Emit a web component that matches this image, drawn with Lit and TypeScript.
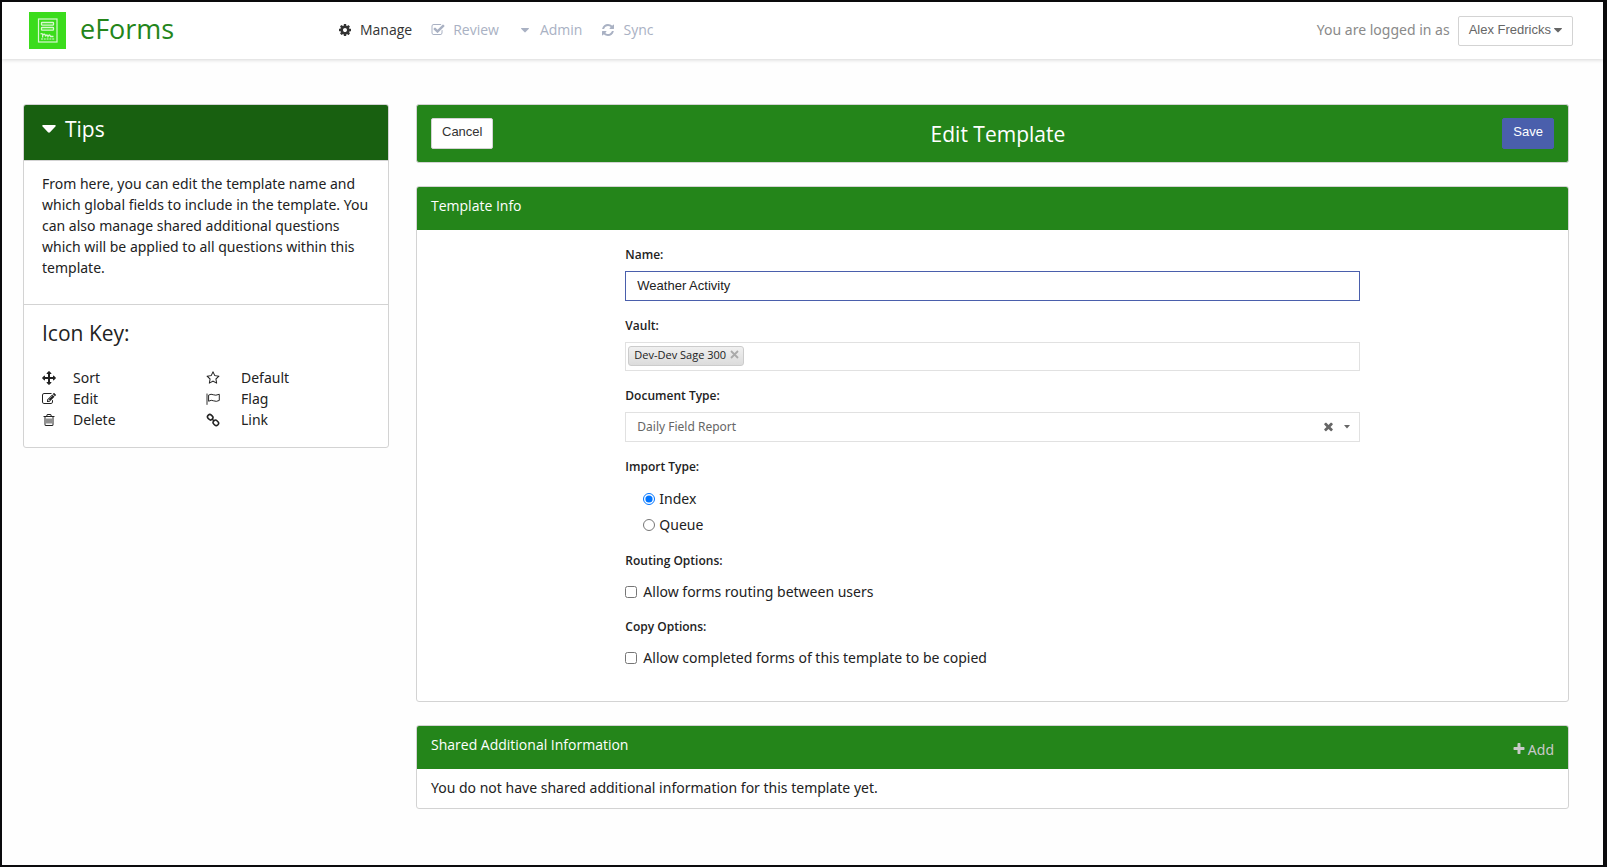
import { LitElement, html, css, svg } from "lit";
import { customElement, state, query } from "lit/decorators.js";

const GLYPHS: Record<string, string> = {
  gear: "M1152 896q0-106-75-181t-181-75-181 75-75 181 75 181 181 75 181-75 75-181zm512-109v222q0 12-8 23t-20 13l-185 28q-19 54-39 91 35 50 107 138 10 12 10 25t-9 23q-27 37-99 108t-94 71q-12 0-26-9l-138-108q-44 23-91 38-16 136-29 186-7 28-36 28h-222q-14 0-24.5-8.5t-11.5-21.5l-28-184q-49-16-90-37l-141 107q-10 9-25 9-14 0-25-11-126-114-165-168-7-10-7-23 0-12 8-23 15-21 51-66.5t54-70.5q-27-50-41-99l-183-27q-13-2-21-12.5t-8-23.5v-222q0-12 8-23t19-13l186-28q14-46 39-92-40-57-107-138-10-12-10-24 0-10 9-23 26-36 98.5-107.5t94.5-71.5q13 0 26 10l138 107q44-23 91-38 16-136 29-186 7-28 36-28h222q14 0 24.5 8.5t11.5 21.5l28 184q49 16 90 37l142-107q9-9 24-9 13 0 25 10 129 119 165 170 7 8 7 22 0 12-8 23-15 21-51 66.5t-54 70.5q26 50 41 98l183 28q13 2 21 12.5t8 23.5z",
  check: "M1472 930v318q0 119-84.5 203.5t-203.5 84.5h-832q-119 0-203.5-84.5t-84.5-203.5v-832q0-119 84.5-203.5t203.5-84.5h832q63 0 117 25 15 7 18 23 3 17-9 29l-49 49q-10 10-23 10-3 0-9-2-23-6-45-6h-832q-66 0-113 47t-47 113v832q0 66 47 113t113 47h832q66 0 113-47t47-113v-254q0-13 9-22l64-64q10-10 23-10 6 0 12 3 20 8 20 29zm231-489l-814 814q-24 24-57 24t-57-24l-430-430q-24-24-24-57t24-57l110-110q24-24 57-24t57 24l263 263 647-647q24-24 57-24t57 24l110 110q24 24 24 57t-24 57z",
  sync: "M1639 1056q0 5-1 7-64 268-268 434.5t-478 166.5q-146 0-282.5-55t-243.5-157l-129 129q-19 19-45 19t-45-19-19-45v-448q0-26 19-45t45-19h448q26 0 45 19t19 45-19 45l-137 137q71 66 161 102t187 36q134 0 250-65t186-179q11-17 53-117 8-23 30-23h192q13 0 22.5 9.5t9.5 22.5zm25-800v448q0 26-19 45t-45 19h-448q-26 0-45-19t-19-45 19-45l138-138q-148-137-349-137-134 0-250 65t-186 179q-11 17-53 117-8 23-30 23h-199q-13 0-22.5-9.5t-9.5-22.5v-7q65-268 270-434.5t480-166.5q146 0 284 55.5t245 156.5l130-129q19-19 45-19t45 19 19 45z",
  caret: "M1408 704q0 26-19 45l-448 448q-19 19-45 19t-45-19l-448-448q-19-19-19-45t19-45 45-19h896q26 0 45 19t19 45z",
  move: "M1792 896q0 26-19 45l-256 256q-19 19-45 19t-45-19-19-45v-128h-384v384h128q26 0 45 19t19 45-19 45l-256 256q-19 19-45 19t-45-19l-256-256q-19-19-19-45t19-45 45-19h128v-384h-384v128q0 26-19 45t-45 19-45-19l-256-256q-19-19-19-45t19-45l256-256q19-19 45-19t45 19 19 45v128h384v-384h-128q-26 0-45-19t-19-45 19-45l256-256q19-19 45-19t45 19l256 256q19 19 19 45t-19 45-45 19h-128v384h384v-128q0-26 19-45t45-19 45 19l256 256q19 19 19 45z",
  edit: "M888 1184l116-116-152-152-116 116v56h96v96h56zm440-720q-16-16-33 1l-350 350q-17 17-1 33t33-1l350-350q17-17 1-33zm80 594v190q0 119-84.5 203.5t-203.5 84.5h-832q-119 0-203.5-84.5t-84.5-203.5v-832q0-119 84.5-203.5t203.5-84.5h832q63 0 117 25 15 7 18 23 3 17-9 29l-49 49q-14 14-32 8-23-6-45-6h-832q-66 0-113 47t-47 113v832q0 66 47 113t113 47h832q66 0 113-47t47-113v-126q0-13 9-22l64-64q15-15 35-7t20 29zm-96-738l288 288-672 672h-288v-288zm444 132l-92 92-288-288 92-92q28-28 68-28t68 28l152 152q28 28 28 68t-28 68z",
  trash: "M704 736v576q0 14-9 23t-23 9h-64q-14 0-23-9t-9-23v-576q0-14 9-23t23-9h64q14 0 23 9t9 23zm256 0v576q0 14-9 23t-23 9h-64q-14 0-23-9t-9-23v-576q0-14 9-23t23-9h64q14 0 23 9t9 23zm256 0v576q0 14-9 23t-23 9h-64q-14 0-23-9t-9-23v-576q0-14 9-23t23-9h64q14 0 23 9t9 23zm128 724v-948h-896v948q0 22 7 40.5t14.5 27 10.5 8.5h832q3 0 10.5-8.5t14.5-27 7-40.5zm-672-1076h448l-48-117q-7-9-17-11h-317q-10 2-17 11zm928 32v64q0 14-9 23t-23 9h-96v948q0 83-47 143.5t-113 60.5h-832q-66 0-113-58.5t-47-141.5v-952h-96q-14 0-23-9t-9-23v-64q0-14 9-23t23-9h309l70-167q15-37 54-63t79-26h320q40 0 79 26t54 63l70 167h309q14 0 23 9t9 23z",
  star: "M1201 1004l306-297-422-62-189-382-189 382-422 62 306 297-73 421 378-199 377 199zm527-357q0 22-26 48l-363 354 86 500q1 7 1 20 0 50-41 50-19 0-40-12l-449-236-449 236q-22 12-40 12-21 0-31.5-14.5t-10.5-35.5q0-6 2-20l86-500-364-354q-25-27-25-48 0-37 56-46l502-73 225-455q19-41 49-41t49 41l225 455 502 73q56 9 56 46z",
  plus: "M1600 736v192q0 40-28 68t-68 28h-416v416q0 40-28 68t-68 28h-192q-40 0-68-28t-28-68v-416h-416q-40 0-68-28t-28-68v-192q0-40 28-68t68-28h416v-416q0-40 28-68t68-28h192q40 0 68 28t28 68v416h416q40 0 68 28t28 68z",
  times: "M1490 1322q0 40-28 68l-136 136q-28 28-68 28t-68-28l-294-294-294 294q-28 28-68 28t-68-28l-136-136q-28-28-28-68t28-68l294-294-294-294q-28-28-28-68t28-68l136-136q28-28 68-28t68 28l294 294 294-294q28-28 68-28t68 28l136 136q28 28 28 68t-28 68l-294 294 294 294q28 28 28 68z",
};

const STROKED: Record<string, unknown> = {
  flag: svg`<path d="M128 200V1640" stroke-width="120" />
    <path d="M330 400Q660 200 930 350T1700 290V1080Q1300 1290 990 1130T330 1180Z" stroke-width="125" />`,
  link: svg`<rect x="180" y="250" width="720" height="580" rx="270" transform="rotate(45 540 540)" stroke-width="200" />
    <rect x="900" y="970" width="720" height="580" rx="270" transform="rotate(45 1260 1260)" stroke-width="200" />
    <path d="M740 740L1060 1060" stroke-width="200" />`,
};

const icon = (name: string) => html`<svg class="icon" viewBox="0 0 1792 1792" aria-hidden="true">
  ${GLYPHS[name]
    ? svg`<path d=${GLYPHS[name]} fill="currentColor" />`
    : svg`<g fill="none" stroke="currentColor" stroke-linejoin="round">${STROKED[name]}</g>`}
</svg>`;

const NAV = [
  { icon: "gear", label: "Manage", active: true },
  { icon: "check", label: "Review", active: false },
  { icon: "caret", label: "Admin", active: false },
  { icon: "sync", label: "Sync", active: false },
];

const ICON_KEY = [
  { icon: "move", label: "Sort" },
  { icon: "star", label: "Default" },
  { icon: "edit", label: "Edit" },
  { icon: "flag", label: "Flag" },
  { icon: "trash", label: "Delete" },
  { icon: "link", label: "Link" },
];

@customElement("app-root")
export class AppRoot extends LitElement {
  @state() private name = "Weather Activity";
  @state() private vaults = ["Dev-Dev Sage 300"];
  @state() private importType = "Index";
  @query("#name") private nameInput!: HTMLInputElement;

  static styles = css`
    :host {
      --display: "Open Sans", "Noto Sans", sans-serif;
      --body: "Noto Sans", "Open Sans", sans-serif;
      display: block;
      box-sizing: border-box;
      min-height: 100vh;
      border: solid #0b0b0d;
      border-width: 2px 4px 3px 2px;
      background: #fefefe;
      color: #222;
      font: 14px/21px var(--body);
    }
    *, *::before, *::after { box-sizing: border-box; }
    h1, h2, h3, p, ul, fieldset { margin: 0; padding: 0; border: 0; font-weight: 400; }
    ul { list-style: none; }
    a { color: inherit; text-decoration: none; }
    button, input, select { font: 13px/18px "Liberation Sans", Arial, sans-serif; color: inherit; }
    button { cursor: pointer; }
    .icon { width: 14px; height: 14px; flex: none; display: block; }

    .topbar {
      display: flex;
      align-items: center;
      height: 57px;
      padding: 0 30px 0 27px;
      background: #fff;
      box-shadow: 0 1px 4px rgba(0, 0, 0, 0.16);
    }
    .brand { display: flex; align-items: center; gap: 14px; width: 309px; color: #24851a; font: 27px/32px var(--display); }
    .brand span { padding-bottom: 4px; }
    .logo { width: 37px; height: 37px; display: block; }
    .nav { display: flex; gap: 19px; flex: 1; padding-bottom: 2px; }
    .nav-link { display: flex; align-items: center; gap: 8px; color: #a9b1c3; font-family: var(--display); }
    .nav-link.active { color: #333; }
    .session { display: flex; align-items: center; gap: 8px; color: #8a8a8a; }
    .session span { padding-bottom: 2px; }
    .user {
      display: flex;
      align-items: flex-start;
      height: 30px;
      padding: 4px 7px 0 10px;
      border: 1px solid #d3d3d3;
      border-radius: 2px;
      background: #fff;
      color: #666;
    }
    .user .icon { margin-top: 2px; }

    .layout {
      display: grid;
      grid-template-columns: 366fr 1153fr;
      gap: 27px;
      align-items: start;
      padding: 45px 34px 56px 21px;
    }
    .main { display: grid; gap: 23px; }
    .card { border: 1px solid #d3d3d3; border-radius: 3px; overflow: hidden; background: #fff; }
    .tips-head {
      display: flex;
      align-items: center;
      gap: 9px;
      width: 100%;
      height: 56px;
      padding: 0 18px 8px;
      border: 0;
      border-bottom: 1px solid #d3d3d3;
      background: #186010;
      color: #fff;
      font: 21px/30px var(--display);
    }
    .tri { width: 14px; height: 8px; display: block; }
    .tips-body { padding: 12px 18px 26px; border-bottom: 1px solid #d3d3d3; }
    .key { padding: 13px 18px 17px; }
    .key-title { font: 21px/30px var(--display); margin-bottom: 19px; }
    .key-list { display: grid; grid-template-columns: 164px 1fr; }
    .key-item { display: flex; align-items: center; gap: 17px; }
    .key-item:nth-child(even) { gap: 21px; }

    .titlebar { display: flex; align-items: center; justify-content: space-between; padding: 13px 14px; background: #24851a; }
    .title { color: #fff; font: 21px/30px var(--display); }
    .btn { height: 31px; padding: 0 10px 4px; border: 1px solid #d3d3d3; border-radius: 2px; background: #fff; color: #333; }
    .btn.primary { border-color: #4a5fac; background: #4a5fac; color: #fff; }

    .head { display: flex; justify-content: space-between; height: 43px; padding: 8px 14px; background: #24851a; color: #fff; }
    .head-title { font: 500 14px/21px var(--display); }
    .add { display: flex; align-items: center; gap: 2px; margin-top: 3px; color: #c9c9c9; }

    .form { width: 63.8%; margin: 0 auto; padding: 15px 0 33px; }
    .label { display: block; padding: 0; font: 600 12px/20px var(--display); margin-bottom: 6px; }
    .field { margin-bottom: 15px; }
    .text { display: block; width: 100%; height: 30px; padding: 0 11px 2px; border: 1px solid #e1e1e1; background: #fff; outline: 0; }
    .text:focus { border-color: #4a5fac; }
    .chips { display: flex; align-items: flex-start; height: 29px; padding: 3px 2px; border: 1px solid #e1e1e1; background: #fff; }
    .chip {
      display: flex;
      gap: 4px;
      height: 20px;
      padding: 0 4px 0 5px;
      border: 1px solid #ccc;
      border-radius: 3px;
      background: linear-gradient(#f0f0f0, #dcdcdc);
      font: 11px/16px var(--display);
    }
    .chip-x { width: 9px; height: 9px; margin-top: 3px; padding: 0; border: 0; background: none; color: #aaa; }
    .chip-x svg { display: block; width: 9px; height: 9px; }
    .chips-input { flex: 1; min-width: 20px; height: 20px; border: 0; padding: 0 4px; outline: 0; background: none; }
    .picker { position: relative; }
    .select {
      display: block;
      width: 100%;
      height: 30px;
      padding: 0 60px 0 11px;
      border: 1px solid #e1e1e1;
      border-radius: 0;
      background: #fff;
      color: #666;
      appearance: none;
      font: 12px/18px var(--body);
    }
    .picker-tools { position: absolute; top: 0; right: 10px; height: 29px; display: flex; align-items: center; gap: 9px; color: #666; pointer-events: none; }
    .clear { padding: 0; border: 0; background: none; pointer-events: auto; }
    .clear .icon { width: 13px; height: 13px; }
    .picker-tools .small { width: 6px; height: 4px; display: block; }
    .radios { display: grid; gap: 5px; padding: 5px 0 1px 18px; }
    .choice { display: flex; align-items: center; gap: 4px; }
    .choice input { width: 12px; height: 12px; margin: 0; }
    .checks { gap: 6px; padding-top: 4px; }
    .empty { padding: 8px 14px 10px; }
  `;

  protected firstUpdated() {
    this.nameInput.focus();
    this.nameInput.setSelectionRange(this.name.length, this.name.length);
  }

  private logo() {
    return html`<svg class="logo" viewBox="0 0 37 37" aria-hidden="true">
      <rect width="37" height="37" fill="#3bdc1c" />
      <g fill="none" stroke="#d8f8d0">
        <rect x="9.5" y="7" width="18.5" height="23" stroke-width="1.2" />
        <rect x="12.500" y="10.500" width="12" height="2.600" rx=".6" stroke-width="1.300" />
        <rect x="12.500" y="15.500" width="12" height="2.600" rx=".6" stroke-width="1.300" />
        <path d="M11.500 22q3-1.500 2 3.500m0-2.500q3-2 3 1.500q1.500-3 2.500 0q1.500-3 2.500 0h3" stroke-width="1.300" />
        <path d="M12 27h13.500" stroke-dasharray="2 .8" />
      </g>
    </svg>`;
  }

  render() {
    return html`
      <header class="topbar">
        <a class="brand" href="#home">${this.logo()}<span>eForms</span></a>
        <nav class="nav">
          ${NAV.map((n) => html`<a class="nav-link ${n.active ? "active" : ""}" href="#${n.label}">${icon(n.icon)}<span>${n.label}</span></a>`)}
        </nav>
        <div class="session">
          <span>You are logged in as</span>
          <button class="user" type="button">Alex Fredricks${icon("caret")}</button>
        </div>
      </header>
      <div class="layout">
        <aside class="card">
          <button class="tips-head" type="button" aria-expanded="true">
            <svg class="tri" viewBox="0 0 14 8" aria-hidden="true"><path d="M1 0h12q1.200.5.4 1.500L8 7.300q-1 .9-2 0L.6 1.500Q-.2.5 1 0z" fill="currentColor" /></svg>
            <span>Tips</span>
          </button>
          <p class="tips-body">
            From here, you can edit the template name and which global fields to include in the template. You can also
            manage shared additional questions which will be applied to all questions within this template.
          </p>
          <section class="key">
            <h2 class="key-title">Icon Key:</h2>
            <ul class="key-list">
              ${ICON_KEY.map((k) => html`<li class="key-item">${icon(k.icon)}<span>${k.label}</span></li>`)}
            </ul>
          </section>
        </aside>
        <main class="main">
          <div class="card titlebar">
            <button class="btn" type="button">Cancel</button>
            <h1 class="title">Edit Template</h1>
            <button class="btn primary" type="submit" form="template">Save</button>
          </div>
          <section class="card">
            <div class="head"><h2 class="head-title">Template Info</h2></div>
            <form class="form" id="template" @submit=${(e: Event) => e.preventDefault()}>
              <div class="field">
                <label class="label" for="name">Name:</label>
                <input class="text" id="name" type="text" autocomplete="off" spellcheck="false" .value=${this.name}
                  @input=${(e: Event) => (this.name = (e.target as HTMLInputElement).value)} />
              </div>
              <div class="field">
                <label class="label" for="vault">Vault:</label>
                <div class="chips">
                  ${this.vaults.map((v) => html`<span class="chip">${v}
                    <button class="chip-x" type="button" aria-label="Remove ${v}"
                      @click=${() => (this.vaults = this.vaults.filter((x) => x !== v))}>
                      <svg viewBox="0 0 9 9"><path d="M1 1l7 7M8 1l-7 7" stroke="currentColor" stroke-width="1.800" /></svg>
                    </button></span>`)}
                  <input class="chips-input" id="vault" type="text" autocomplete="off" />
                </div>
              </div>
              <div class="field">
                <label class="label" for="doctype">Document Type:</label>
                <div class="picker">
                  <select class="select" id="doctype"><option>Daily Field Report</option></select>
                  <div class="picker-tools">
                    <button class="clear" type="button" aria-label="Clear document type">${icon("times")}</button>
                    <svg class="small" viewBox="0 0 6 4" aria-hidden="true"><path d="M0 0h6L3 3.500z" fill="currentColor" /></svg>
                  </div>
                </div>
              </div>
              <fieldset class="field">
                <legend class="label">Import Type:</legend>
                <div class="radios">
                  ${["Index", "Queue"].map((t) => html`<label class="choice">
                    <input type="radio" name="import" .checked=${this.importType === t} @change=${() => (this.importType = t)} />
                    <span>${t}</span></label>`)}
                </div>
              </fieldset>
              <fieldset class="field">
                <legend class="label">Routing Options:</legend>
                <label class="choice checks"><input type="checkbox" /><span>Allow forms routing between users</span></label>
              </fieldset>
              <fieldset>
                <legend class="label">Copy Options:</legend>
                <label class="choice checks"><input type="checkbox" /><span>Allow completed forms of this template to be copied</span></label>
              </fieldset>
            </form>
          </section>
          <section class="card">
            <div class="head">
              <h2 class="head-title">Shared Additional Information</h2>
              <a class="add" href="#add">${icon("plus")}<span>Add</span></a>
            </div>
            <p class="empty">You do not have shared additional information for this template yet.</p>
          </section>
        </main>
      </div>
    `;
  }
}
